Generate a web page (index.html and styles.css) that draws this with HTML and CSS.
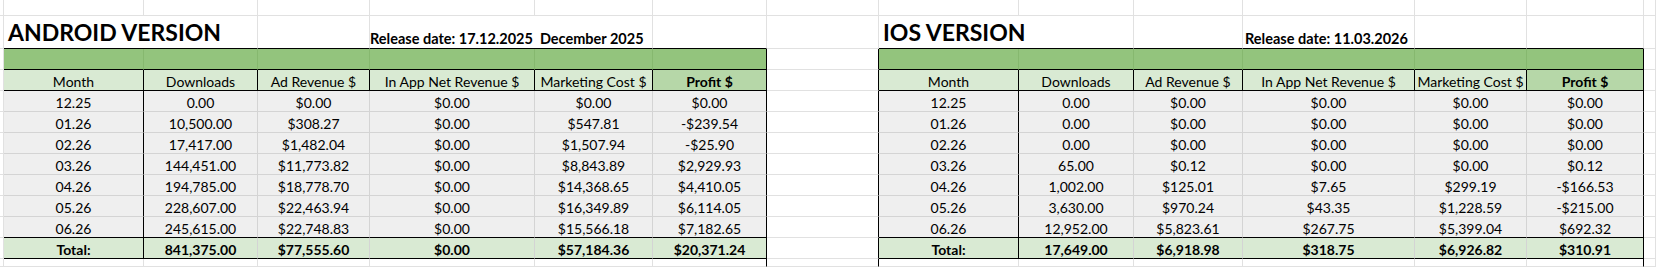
FILE: index.html
```html
<!DOCTYPE html>
<html lang="en">
<head>
<meta charset="utf-8">
<title>Revenue sheet</title>
<link rel="stylesheet" href="styles.css">
</head>
<body>
<div class="sheet">
  <!-- row 0 -->
  <div class="c"></div><div class="c"></div><div class="c"></div><div class="c"></div><div class="c"></div><div class="c"></div><div class="c"></div><div class="c"></div><div class="c"></div><div class="c"></div><div class="c"></div><div class="c"></div><div class="c"></div><div class="c"></div><div class="c"></div>
  <!-- row 1: titles -->
  <div class="c"></div>
  <div class="c tb title span2">ANDROID VERSION</div>
  <div class="c tb"></div>
  <div class="c tb release rel-left span2">Release date: 17.12.2025<span class="month">December 2025</span></div>
  <div class="c tb"></div>
  <div class="c"></div>
  <div class="c tb title span2">IOS VERSION</div>
  <div class="c tb"></div>
  <div class="c tb release rel-right">Release date: 11.03.2026</div>
  <div class="c tb"></div>
  <div class="c tb"></div>
  <div class="c"></div>
  <!-- row 2: green bar -->
  <div class="c"></div>
  <div class="c bar"></div><div class="c bar"></div><div class="c bar"></div><div class="c bar"></div><div class="c bar"></div><div class="c bar edge"></div>
  <div class="c edge"></div>
  <div class="c bar"></div><div class="c bar"></div><div class="c bar"></div><div class="c bar"></div><div class="c bar"></div><div class="c bar edge"></div>
  <div class="c"></div>
  <!-- row 3: header -->
  <div class="c"></div>
  <div class="c hd">Month</div><div class="c hd">Downloads</div><div class="c hd">Ad Revenue $</div><div class="c hd">In App Net Revenue $</div><div class="c hd">Marketing Cost $</div><div class="c hd profit">Profit $</div>
  <div class="c edge"></div>
  <div class="c hd">Month</div><div class="c hd">Downloads</div><div class="c hd">Ad Revenue $</div><div class="c hd">In App Net Revenue $</div><div class="c hd">Marketing Cost $</div><div class="c hd profit">Profit $</div>
  <div class="c"></div>
  <!-- data rows -->
  <div class="c"></div>
  <div class="c d first">12.25</div><div class="c d">0.00</div><div class="c d">$0.00</div><div class="c d">$0.00</div><div class="c d">$0.00</div><div class="c d edge">$0.00</div>
  <div class="c edge"></div>
  <div class="c d first">12.25</div><div class="c d">0.00</div><div class="c d">$0.00</div><div class="c d">$0.00</div><div class="c d">$0.00</div><div class="c d edge">$0.00</div>
  <div class="c"></div>

  <div class="c"></div>
  <div class="c d first">01.26</div><div class="c d">10,500.00</div><div class="c d">$308.27</div><div class="c d">$0.00</div><div class="c d">$547.81</div><div class="c d edge">-$239.54</div>
  <div class="c edge"></div>
  <div class="c d first">01.26</div><div class="c d">0.00</div><div class="c d">$0.00</div><div class="c d">$0.00</div><div class="c d">$0.00</div><div class="c d edge">$0.00</div>
  <div class="c"></div>

  <div class="c"></div>
  <div class="c d first">02.26</div><div class="c d">17,417.00</div><div class="c d">$1,482.04</div><div class="c d">$0.00</div><div class="c d">$1,507.94</div><div class="c d edge">-$25.90</div>
  <div class="c edge"></div>
  <div class="c d first">02.26</div><div class="c d">0.00</div><div class="c d">$0.00</div><div class="c d">$0.00</div><div class="c d">$0.00</div><div class="c d edge">$0.00</div>
  <div class="c"></div>

  <div class="c"></div>
  <div class="c d first">03.26</div><div class="c d">144,451.00</div><div class="c d">$11,773.82</div><div class="c d">$0.00</div><div class="c d">$8,843.89</div><div class="c d edge">$2,929.93</div>
  <div class="c edge"></div>
  <div class="c d first">03.26</div><div class="c d">65.00</div><div class="c d">$0.12</div><div class="c d">$0.00</div><div class="c d">$0.00</div><div class="c d edge">$0.12</div>
  <div class="c"></div>

  <div class="c"></div>
  <div class="c d first">04.26</div><div class="c d">194,785.00</div><div class="c d">$18,778.70</div><div class="c d">$0.00</div><div class="c d">$14,368.65</div><div class="c d edge">$4,410.05</div>
  <div class="c edge"></div>
  <div class="c d first">04.26</div><div class="c d">1,002.00</div><div class="c d">$125.01</div><div class="c d">$7.65</div><div class="c d">$299.19</div><div class="c d edge">-$166.53</div>
  <div class="c"></div>

  <div class="c"></div>
  <div class="c d first">05.26</div><div class="c d">228,607.00</div><div class="c d">$22,463.94</div><div class="c d">$0.00</div><div class="c d">$16,349.89</div><div class="c d edge">$6,114.05</div>
  <div class="c edge"></div>
  <div class="c d first">05.26</div><div class="c d">3,630.00</div><div class="c d">$970.24</div><div class="c d">$43.35</div><div class="c d">$1,228.59</div><div class="c d edge">-$215.00</div>
  <div class="c"></div>

  <div class="c"></div>
  <div class="c d last first">06.26</div><div class="c d last">245,615.00</div><div class="c d last">$22,748.83</div><div class="c d last">$0.00</div><div class="c d last">$15,566.18</div><div class="c d last edge">$7,182.65</div>
  <div class="c edge"></div>
  <div class="c d last first">06.26</div><div class="c d last">12,952.00</div><div class="c d last">$5,823.61</div><div class="c d last">$267.75</div><div class="c d last">$5,399.04</div><div class="c d last edge">$692.32</div>
  <div class="c"></div>

  <!-- total row -->
  <div class="c"></div>
  <div class="c tot first">Total:</div><div class="c tot">841,375.00</div><div class="c tot">$77,555.60</div><div class="c tot">$0.00</div><div class="c tot">$57,184.36</div><div class="c tot edge">$20,371.24</div>
  <div class="c edge"></div>
  <div class="c tot first">Total:</div><div class="c tot">17,649.00</div><div class="c tot">$6,918.98</div><div class="c tot">$318.75</div><div class="c tot">$6,926.82</div><div class="c tot edge">$310.91</div>
  <div class="c"></div>

  <!-- bottom row -->
  <div class="c"></div>
  <div class="c"></div><div class="c"></div><div class="c"></div><div class="c"></div><div class="c"></div><div class="c edge"></div>
  <div class="c edge"></div>
  <div class="c"></div><div class="c"></div><div class="c"></div><div class="c"></div><div class="c"></div><div class="c edge"></div>
  <div class="c"></div>
</div>
</body>
</html>
```
FILE: styles.css
```css
html, body {
  margin: 0;
  padding: 0;
  background: #ffffff;
}

.sheet {
  display: grid;
  grid-template-columns: 4px 140px 114px 112px 165px 118px 114px 112px 140px 115px 109px 172px 112px 117px 1fr;
  grid-template-rows: 16px 33px 21px 21px repeat(7, 21px) 21px 1fr;
  height: 267px;
  font-family: Lato, "Liberation Sans", sans-serif;
  font-size: 14px;
  color: #000000;
}

.c {
  box-sizing: border-box;
  border-right: 1px solid #e1e1e1;
  border-bottom: 1px solid #e1e1e1;
  padding-top: 3px;
  line-height: 18px;
  text-align: center;
  white-space: nowrap;
  overflow: visible;
  min-width: 0;
}

.span2 {
  grid-column: span 2;
}

.tb {
  border-bottom-color: #000000;
}

.title {
  text-align: left;
  font-size: 23px;
  font-weight: 700;
  line-height: 22px;
  padding-top: 5px;
  padding-left: 4px;
}

.release {
  text-align: left;
  font-size: 14.5px;
  font-weight: 700;
  padding-top: 14px;
}

.rel-left {
  padding-left: 0;
}

.rel-right {
  padding-left: 2px;
}

.month {
  margin-left: 7px;
}

.bar {
  background: #93c47d;
  border-right-color: #86b86f;
  border-bottom-color: #000000;
}

.hd {
  background: #d9ead3;
  border-right-color: #000000;
  border-bottom-color: #000000;
}

.hd.profit {
  background: #b6d7a8;
  font-weight: 700;
}

.d {
  background: #efefef;
  border-right-color: #d4d4d4;
  border-bottom-color: #d4d4d4;
}

.d.last {
  border-bottom-color: #000000;
}

.tot {
  background: #d9ead3;
  font-weight: 700;
  border-right-color: #d4d4d4;
  border-bottom-color: #000000;
}

.first {
  border-right-color: #000000;
}

.edge {
  border-right-color: #000000;
}
```
